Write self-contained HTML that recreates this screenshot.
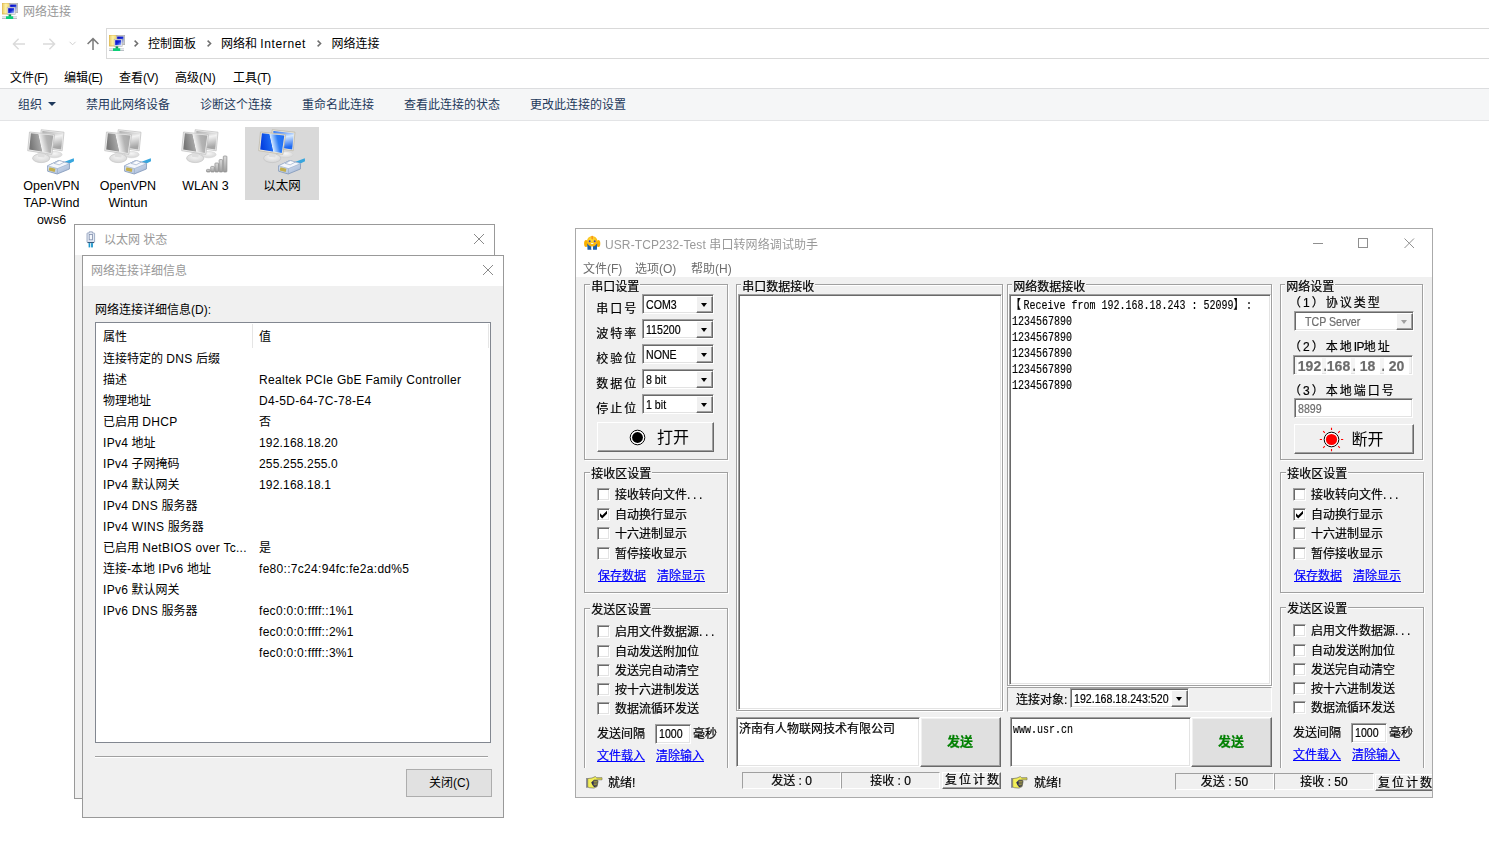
<!DOCTYPE html>
<html lang="zh-CN">
<head>
<meta charset="utf-8">
<title>网络连接</title>
<style>
*{box-sizing:border-box;margin:0;padding:0}
html,body{width:1489px;height:852px;overflow:hidden;background:#fff}
body{position:relative;font-family:"Liberation Sans","Noto Sans CJK SC",sans-serif;font-size:12px;color:#000;-webkit-font-smoothing:antialiased}
.a{position:absolute}
.t{position:absolute;white-space:nowrap;line-height:14px;height:14px;font-size:12px}
.g{color:#999}
.tb{color:#1e395b}
.ic{position:absolute;display:block}
/* classic 3D */
.sunk{position:absolute;background:#fff;border:1px solid;border-color:#a0a0a0 #fff #fff #a0a0a0;box-shadow:inset 1px 1px 0 #696969,inset -1px -1px 0 #e3e3e3}
.rais{position:absolute;background:#f0f0f0;border:1px solid;border-color:#fff #696969 #696969 #fff;box-shadow:inset -1px -1px 0 #a0a0a0,inset 1px 1px 0 #f0f0f0}
.grp{position:absolute;border:1px solid #a0a0a0;box-shadow:1px 1px 0 #fff,inset 1px 1px 0 #fff}
.gl{position:absolute;background:#f0f0f0;white-space:nowrap;line-height:14px;height:14px;font-size:12px;padding:0 1px}
.cb{position:absolute;width:13px;height:13px;background:#fff;border:1px solid;border-color:#a0a0a0 #fff #fff #a0a0a0;box-shadow:inset 1px 1px 0 #696969,inset -1px -1px 0 #e3e3e3}
.lk{color:#00f;text-decoration:underline;text-decoration-thickness:1px;text-underline-offset:.5px}
.sp{letter-spacing:2px}
.u{-webkit-text-stroke:.2px}
.l{letter-spacing:.3px}
.d{letter-spacing:.17px}
.dd{position:absolute;width:17px;height:17px;background:#f0f0f0;border:1px solid;border-color:#fff #696969 #696969 #fff;box-shadow:inset -1px -1px 0 #a0a0a0}
.dd:after{content:"";position:absolute;left:4px;top:6px;border:4px solid transparent;border-left-width:3.5px;border-right-width:3.5px;border-top-color:#000;border-bottom-width:0}
.ddg:after{border-top-color:#a0a0a0}
.ms{font-family:"Liberation Sans",sans-serif;font-size:12.5px;transform:scaleX(.85);transform-origin:0 0}
.mono{font-family:"Liberation Mono","Noto Sans CJK SC",monospace;font-size:12.5px;line-height:16px;white-space:pre;transform:scaleX(.8);transform-origin:0 0;-webkit-text-stroke:.15px #000}
.fw{letter-spacing:3.1px;font-weight:bold}
.dots{letter-spacing:2.6px}
.ipf{position:absolute;top:2px;width:25px;height:16px;background:#fff;text-align:center;font:bold 14px/17px "Liberation Sans",sans-serif;color:#6d6d6d;white-space:nowrap}
.ipd{position:absolute;top:2px;width:4px;height:16px;text-align:center;font:bold 14px/17px "Liberation Sans",sans-serif;color:#6d6d6d}
.pane{position:absolute;border:1px solid;border-color:#a0a0a0 #fff #fff #a0a0a0;text-align:center;padding-top:1px;line-height:14px;font-size:12px;white-space:nowrap}
.row{position:absolute;left:103px;white-space:nowrap;line-height:14px;height:14px}
.val{position:absolute;left:259px;white-space:nowrap;line-height:14px;height:14px}
</style>
</head>
<body>

<!-- ===== Explorer window: 网络连接 ===== -->
<svg class="ic" style="left:2px;top:3px" width="16" height="16" viewBox="0 0 16 16">
<linearGradient id="fot" x1="0" y1="0" x2="1" y2="0"><stop offset="0" stop-color="#e9c765"/><stop offset=".45" stop-color="#fdf3a4"/><stop offset="1" stop-color="#eecb62"/></linearGradient>
<linearGradient id="sct" x1="0" y1="0" x2="1" y2="1"><stop offset="0" stop-color="#0000c8"/><stop offset=".5" stop-color="#1428d8"/><stop offset="1" stop-color="#b8d0ff"/></linearGradient>
<rect x="0" y="0" width="8.5" height="11" fill="url(#fot)" stroke="#d9b24c" stroke-width=".8"/>
<rect x="7.3" y="0.3" width="8.4" height="9.4" fill="#c9c9c9" stroke="#a8a8a8" stroke-width=".6"/>
<rect x="8.2" y="1.6" width="6.2" height="6.4" fill="url(#sct)"/>
<rect x="5.2" y="4.2" width="8" height="7.2" fill="#ececec" stroke="#b4b4b4" stroke-width=".6"/>
<rect x="6.2" y="5.2" width="6" height="5" fill="url(#sct)"/>
<rect x="0" y="13.4" width="15" height="1" fill="#c3c9cf"/>
<rect x="0" y="15" width="15" height="1" fill="#b9bfc5"/>
<rect x="6.6" y="11.4" width="2.6" height="2.4" fill="#0a9a52"/>
<rect x="4" y="13.3" width="7.2" height="2.7" fill="#0ccf78"/>
</svg>
<div class="t g" style="left:23px;top:5.4px;">网络连接</div>
<svg class="ic" style="left:10px;top:36px" width="92" height="16" viewBox="0 0 92 16">
<g fill="none" stroke="#dadada" stroke-width="1.4"><path d="M15 8H3.5M8.6 2.8L3.4 8l5.2 5.2"/><path d="M33 8h11.5M39.4 2.8L44.6 8l-5.2 5.2"/></g>
<path d="M59.6 5.8l3 3 3-3" fill="none" stroke="#d0d0d0" stroke-width="1"/>
<path d="M83 14V2.6M77.6 8L83 2.6 88.4 8" fill="none" stroke="#7a7a7a" stroke-width="1.5"/>
</svg>
<div class="a" style="left:106px;top:28px;width:1400px;height:31px;border:1px solid #d9d9d9;background:#fff"></div>
<svg class="ic" style="left:109px;top:35px" width="16" height="16" viewBox="0 0 16 16">
<linearGradient id="fon" x1="0" y1="0" x2="1" y2="0"><stop offset="0" stop-color="#e9c765"/><stop offset=".45" stop-color="#fdf3a4"/><stop offset="1" stop-color="#eecb62"/></linearGradient>
<linearGradient id="scn" x1="0" y1="0" x2="1" y2="1"><stop offset="0" stop-color="#0000c8"/><stop offset=".5" stop-color="#1428d8"/><stop offset="1" stop-color="#b8d0ff"/></linearGradient>
<rect x="0" y="0" width="8.5" height="11" fill="url(#fon)" stroke="#d9b24c" stroke-width=".8"/>
<rect x="7.3" y="0.3" width="8.4" height="9.4" fill="#c9c9c9" stroke="#a8a8a8" stroke-width=".6"/>
<rect x="8.2" y="1.6" width="6.2" height="6.4" fill="url(#scn)"/>
<rect x="5.2" y="4.2" width="8" height="7.2" fill="#ececec" stroke="#b4b4b4" stroke-width=".6"/>
<rect x="6.2" y="5.2" width="6" height="5" fill="url(#scn)"/>
<rect x="0" y="13.4" width="15" height="1" fill="#c3c9cf"/>
<rect x="0" y="15" width="15" height="1" fill="#b9bfc5"/>
<rect x="6.6" y="11.4" width="2.6" height="2.4" fill="#0a9a52"/>
<rect x="4" y="13.3" width="7.2" height="2.7" fill="#0ccf78"/>
</svg>
<svg class="ic" style="left:132.5px;top:39px" width="7" height="9" viewBox="0 0 7 9"><path d="M1.6 1.6L4.6 4.5 1.6 7.4" fill="none" stroke="#6e6e6e" stroke-width="1.5"/></svg>
<svg class="ic" style="left:205.5px;top:39px" width="7" height="9" viewBox="0 0 7 9"><path d="M1.6 1.6L4.6 4.5 1.6 7.4" fill="none" stroke="#6e6e6e" stroke-width="1.5"/></svg>
<svg class="ic" style="left:315.5px;top:39px" width="7" height="9" viewBox="0 0 7 9"><path d="M1.6 1.6L4.6 4.5 1.6 7.4" fill="none" stroke="#6e6e6e" stroke-width="1.5"/></svg>
<div class="t" style="left:148px;top:37px;">控制面板</div>
<div class="t" style="left:221px;top:37px;">网络和 <span style="letter-spacing:.62px">Internet</span></div>
<div class="t" style="left:331.5px;top:37px;">网络连接</div>
<div class="t" style="left:10px;top:71.4px;">文件<span style="letter-spacing:-0.7px">(F)</span></div>
<div class="t" style="left:64px;top:71.4px;">编辑<span style="letter-spacing:-0.6px">(E)</span></div>
<div class="t" style="left:119px;top:71.4px;">查看<span style="letter-spacing:-0.3px">(V)</span></div>
<div class="t" style="left:175px;top:71.4px;">高级<span style="letter-spacing:0px">(N)</span></div>
<div class="t" style="left:233px;top:71.4px;">工具<span style="letter-spacing:-0.5px">(T)</span></div>
<div class="a" style="left:0;top:88px;width:1489px;height:33px;background:#f5f6f7;border-top:1px solid #dcdddf;border-bottom:1px solid #e3e4e6"></div>
<div class="t tb" style="left:18px;top:98px;">组织</div>
<div class="t tb" style="left:86px;top:98px;">禁用此网络设备</div>
<div class="t tb" style="left:200px;top:98px;">诊断这个连接</div>
<div class="t tb" style="left:302px;top:98px;">重命名此连接</div>
<div class="t tb" style="left:404px;top:98px;">查看此连接的状态</div>
<div class="t tb" style="left:530px;top:98px;">更改此连接的设置</div>
<div class="a" style="left:48px;top:102px;width:0;height:0;border:4px solid transparent;border-top:4.5px solid #1e395b;border-bottom:0"></div>
<div class="a" style="left:245px;top:127px;width:74px;height:73px;background:#d9d9d9"></div>
<svg class="ic" style="left:27px;top:128px" width="50" height="48" viewBox="0 0 50 48">
<linearGradient id="ai1" x1="0" y1="0.3" x2="1" y2="0.12"><stop offset="0" stop-color="#777777"/><stop offset=".4" stop-color="#a6a6a6"/><stop offset=".43" stop-color="#f2f2f2"/><stop offset=".7" stop-color="#b4b4b4"/><stop offset="1" stop-color="#a6a6a6"/></linearGradient>
<linearGradient id="bi1" x1="0" y1="0" x2="0.25" y2="1"><stop offset="0" stop-color="#a6a6a6"/><stop offset=".45" stop-color="#f2f2f2"/><stop offset="1" stop-color="#a6a6a6"/></linearGradient>
<linearGradient id="pi1" x1="0" y1="0" x2="1" y2="1"><stop offset="0" stop-color="#eef3fb"/><stop offset="1" stop-color="#9fb4d4"/></linearGradient>
<linearGradient id="wi1" x1="0" y1="0" x2="0" y2="1"><stop offset="0" stop-color="#dcdcdc"/><stop offset="1" stop-color="#9c9c9c"/></linearGradient>
<radialGradient id="ei1" cx=".5" cy=".35" r=".7"><stop offset="0" stop-color="#f6f6f6"/><stop offset="1" stop-color="#d2d2d2"/></radialGradient>
<ellipse cx="27.5" cy="26.6" rx="7.6" ry="3.2" fill="url(#ei1)" stroke="#d0d0d0" stroke-width=".5"/>
<polygon points="14.2,1.7 37,4.2 35.2,22.8 12.8,19.6" fill="#ececec" stroke="#bdbdbd" stroke-width=".7"/>
<polygon points="15.4,3 35.8,5.2 34.2,21.4 14.2,18.5" fill="url(#bi1)"/>
<ellipse cx="14.2" cy="30.2" rx="8.6" ry="4.4" fill="url(#ei1)" stroke="#c4c4c4" stroke-width=".7"/>
<polygon points="10.5,24 18,25 17.4,29.6 11.2,29" fill="#dedede"/>
<polygon points="2.5,4 27.6,6.6 24.8,26.4 0.7,22.7" fill="#ececec" stroke="#bdbdbd" stroke-width=".7"/>
<polygon points="3.9,5.3 26.3,7.6 23.8,25 2.2,21.6" fill="url(#ai1)"/>
<polygon points="37.5,33.8 46.8,30.2 47,33.2 40.5,36.4" fill="#38a6de"/>
<polygon points="20.6,37.8 31.5,32.6 42.6,35.6 42.4,41 30.2,46 20.6,43.2" fill="url(#pi1)" stroke="#7f95b8" stroke-width=".8"/>
<polygon points="20.6,37.8 31.5,32.6 42.6,35.6 30.4,40.6" fill="#f4f7fc" stroke="#98abc9" stroke-width=".6"/>
<polygon points="27.2,35.4 32.4,32.6 37.4,34 32.2,36.8" fill="#fbfcfe" stroke="#8fa3c3" stroke-width=".6"/>
<path d="M30.4 40.6V46" stroke="#8fa3c3" stroke-width=".6"/>
<rect x="22" y="40" width="6.2" height="3.2" fill="#c2ae4c" transform="rotate(14 25 41.5)"/>
</svg>
<svg class="ic" style="left:104px;top:128px" width="50" height="48" viewBox="0 0 50 48">
<linearGradient id="ai2" x1="0" y1="0.3" x2="1" y2="0.12"><stop offset="0" stop-color="#777777"/><stop offset=".4" stop-color="#a6a6a6"/><stop offset=".43" stop-color="#f2f2f2"/><stop offset=".7" stop-color="#b4b4b4"/><stop offset="1" stop-color="#a6a6a6"/></linearGradient>
<linearGradient id="bi2" x1="0" y1="0" x2="0.25" y2="1"><stop offset="0" stop-color="#a6a6a6"/><stop offset=".45" stop-color="#f2f2f2"/><stop offset="1" stop-color="#a6a6a6"/></linearGradient>
<linearGradient id="pi2" x1="0" y1="0" x2="1" y2="1"><stop offset="0" stop-color="#eef3fb"/><stop offset="1" stop-color="#9fb4d4"/></linearGradient>
<linearGradient id="wi2" x1="0" y1="0" x2="0" y2="1"><stop offset="0" stop-color="#dcdcdc"/><stop offset="1" stop-color="#9c9c9c"/></linearGradient>
<radialGradient id="ei2" cx=".5" cy=".35" r=".7"><stop offset="0" stop-color="#f6f6f6"/><stop offset="1" stop-color="#d2d2d2"/></radialGradient>
<ellipse cx="27.5" cy="26.6" rx="7.6" ry="3.2" fill="url(#ei2)" stroke="#d0d0d0" stroke-width=".5"/>
<polygon points="14.2,1.7 37,4.2 35.2,22.8 12.8,19.6" fill="#ececec" stroke="#bdbdbd" stroke-width=".7"/>
<polygon points="15.4,3 35.8,5.2 34.2,21.4 14.2,18.5" fill="url(#bi2)"/>
<ellipse cx="14.2" cy="30.2" rx="8.6" ry="4.4" fill="url(#ei2)" stroke="#c4c4c4" stroke-width=".7"/>
<polygon points="10.5,24 18,25 17.4,29.6 11.2,29" fill="#dedede"/>
<polygon points="2.5,4 27.6,6.6 24.8,26.4 0.7,22.7" fill="#ececec" stroke="#bdbdbd" stroke-width=".7"/>
<polygon points="3.9,5.3 26.3,7.6 23.8,25 2.2,21.6" fill="url(#ai2)"/>
<polygon points="37.5,33.8 46.8,30.2 47,33.2 40.5,36.4" fill="#38a6de"/>
<polygon points="20.6,37.8 31.5,32.6 42.6,35.6 42.4,41 30.2,46 20.6,43.2" fill="url(#pi2)" stroke="#7f95b8" stroke-width=".8"/>
<polygon points="20.6,37.8 31.5,32.6 42.6,35.6 30.4,40.6" fill="#f4f7fc" stroke="#98abc9" stroke-width=".6"/>
<polygon points="27.2,35.4 32.4,32.6 37.4,34 32.2,36.8" fill="#fbfcfe" stroke="#8fa3c3" stroke-width=".6"/>
<path d="M30.4 40.6V46" stroke="#8fa3c3" stroke-width=".6"/>
<rect x="22" y="40" width="6.2" height="3.2" fill="#c2ae4c" transform="rotate(14 25 41.5)"/>
</svg>
<svg class="ic" style="left:181px;top:128px" width="50" height="48" viewBox="0 0 50 48">
<linearGradient id="ai3" x1="0" y1="0.3" x2="1" y2="0.12"><stop offset="0" stop-color="#777777"/><stop offset=".4" stop-color="#a6a6a6"/><stop offset=".43" stop-color="#f2f2f2"/><stop offset=".7" stop-color="#b4b4b4"/><stop offset="1" stop-color="#a6a6a6"/></linearGradient>
<linearGradient id="bi3" x1="0" y1="0" x2="0.25" y2="1"><stop offset="0" stop-color="#a6a6a6"/><stop offset=".45" stop-color="#f2f2f2"/><stop offset="1" stop-color="#a6a6a6"/></linearGradient>
<linearGradient id="pi3" x1="0" y1="0" x2="1" y2="1"><stop offset="0" stop-color="#eef3fb"/><stop offset="1" stop-color="#9fb4d4"/></linearGradient>
<linearGradient id="wi3" x1="0" y1="0" x2="0" y2="1"><stop offset="0" stop-color="#dcdcdc"/><stop offset="1" stop-color="#9c9c9c"/></linearGradient>
<radialGradient id="ei3" cx=".5" cy=".35" r=".7"><stop offset="0" stop-color="#f6f6f6"/><stop offset="1" stop-color="#d2d2d2"/></radialGradient>
<ellipse cx="27.5" cy="26.6" rx="7.6" ry="3.2" fill="url(#ei3)" stroke="#d0d0d0" stroke-width=".5"/>
<polygon points="14.2,1.7 37,4.2 35.2,22.8 12.8,19.6" fill="#ececec" stroke="#bdbdbd" stroke-width=".7"/>
<polygon points="15.4,3 35.8,5.2 34.2,21.4 14.2,18.5" fill="url(#bi3)"/>
<ellipse cx="14.2" cy="30.2" rx="8.6" ry="4.4" fill="url(#ei3)" stroke="#c4c4c4" stroke-width=".7"/>
<polygon points="10.5,24 18,25 17.4,29.6 11.2,29" fill="#dedede"/>
<polygon points="2.5,4 27.6,6.6 24.8,26.4 0.7,22.7" fill="#ececec" stroke="#bdbdbd" stroke-width=".7"/>
<polygon points="3.9,5.3 26.3,7.6 23.8,25 2.2,21.6" fill="url(#ai3)"/>
<rect x="25.5" y="41.4" width="3.6" height="2.6" rx=".8" fill="url(#wi3)" stroke="#8a8a8a" stroke-width=".7"/>
<rect x="29.7" y="38.4" width="3.6" height="5.6" rx=".8" fill="url(#wi3)" stroke="#8a8a8a" stroke-width=".7"/>
<rect x="33.9" y="35.0" width="3.6" height="9" rx=".8" fill="url(#wi3)" stroke="#8a8a8a" stroke-width=".7"/>
<rect x="38.1" y="31.6" width="3.6" height="12.4" rx=".8" fill="url(#wi3)" stroke="#8a8a8a" stroke-width=".7"/>
<rect x="42.3" y="28.0" width="3.6" height="16" rx=".8" fill="url(#wi3)" stroke="#8a8a8a" stroke-width=".7"/>
</svg>
<svg class="ic" style="left:258px;top:128px" width="50" height="48" viewBox="0 0 50 48">
<linearGradient id="ai4" x1="0" y1="0.3" x2="1" y2="0.12"><stop offset="0" stop-color="#0540e0"/><stop offset=".4" stop-color="#1e6af2"/><stop offset=".43" stop-color="#d6e9ff"/><stop offset=".7" stop-color="#2b7cf6"/><stop offset="1" stop-color="#1e6af2"/></linearGradient>
<linearGradient id="bi4" x1="0" y1="0" x2="0.25" y2="1"><stop offset="0" stop-color="#1e6af2"/><stop offset=".45" stop-color="#d6e9ff"/><stop offset="1" stop-color="#1e6af2"/></linearGradient>
<linearGradient id="pi4" x1="0" y1="0" x2="1" y2="1"><stop offset="0" stop-color="#eef3fb"/><stop offset="1" stop-color="#9fb4d4"/></linearGradient>
<linearGradient id="wi4" x1="0" y1="0" x2="0" y2="1"><stop offset="0" stop-color="#dcdcdc"/><stop offset="1" stop-color="#9c9c9c"/></linearGradient>
<radialGradient id="ei4" cx=".5" cy=".35" r=".7"><stop offset="0" stop-color="#f6f6f6"/><stop offset="1" stop-color="#d2d2d2"/></radialGradient>
<ellipse cx="27.5" cy="26.6" rx="7.6" ry="3.2" fill="url(#ei4)" stroke="#d0d0d0" stroke-width=".5"/>
<polygon points="14.2,1.7 37,4.2 35.2,22.8 12.8,19.6" fill="#efebe0" stroke="#b9b3a4" stroke-width=".7"/>
<polygon points="15.4,3 35.8,5.2 34.2,21.4 14.2,18.5" fill="url(#bi4)"/>
<ellipse cx="14.2" cy="30.2" rx="8.6" ry="4.4" fill="url(#ei4)" stroke="#c4c4c4" stroke-width=".7"/>
<polygon points="10.5,24 18,25 17.4,29.6 11.2,29" fill="#dedede"/>
<polygon points="2.5,4 27.6,6.6 24.8,26.4 0.7,22.7" fill="#efebe0" stroke="#b9b3a4" stroke-width=".7"/>
<polygon points="3.9,5.3 26.3,7.6 23.8,25 2.2,21.6" fill="url(#ai4)"/>
<polygon points="37.5,33.8 46.8,30.2 47,33.2 40.5,36.4" fill="#38a6de"/>
<polygon points="20.6,37.8 31.5,32.6 42.6,35.6 42.4,41 30.2,46 20.6,43.2" fill="url(#pi4)" stroke="#7f95b8" stroke-width=".8"/>
<polygon points="20.6,37.8 31.5,32.6 42.6,35.6 30.4,40.6" fill="#f4f7fc" stroke="#98abc9" stroke-width=".6"/>
<polygon points="27.2,35.4 32.4,32.6 37.4,34 32.2,36.8" fill="#fbfcfe" stroke="#8fa3c3" stroke-width=".6"/>
<path d="M30.4 40.6V46" stroke="#8fa3c3" stroke-width=".6"/>
<rect x="22" y="40" width="6.2" height="3.2" fill="#c2ae4c" transform="rotate(14 25 41.5)"/>
</svg>
<div class="t" style="left:11.5px;top:178px;width:80px;text-align:center;line-height:17px;height:17px;font-size:12.5px">OpenVPN</div>
<div class="t" style="left:11.5px;top:195px;width:80px;text-align:center;line-height:17px;height:17px;font-size:12.5px">TAP-Wind</div>
<div class="t" style="left:11.5px;top:212px;width:80px;text-align:center;line-height:17px;height:17px;font-size:12.5px">ows6</div>
<div class="t" style="left:88px;top:178px;width:80px;text-align:center;line-height:17px;height:17px;font-size:12.5px">OpenVPN</div>
<div class="t" style="left:88px;top:195px;width:80px;text-align:center;line-height:17px;height:17px;font-size:12.5px">Wintun</div>
<div class="t" style="left:165.5px;top:178px;width:80px;text-align:center;line-height:17px;height:17px;font-size:12.5px">WLAN 3</div>
<div class="t" style="left:242px;top:178px;width:80px;text-align:center;line-height:17px;height:17px;font-size:12.5px">以太网</div>
<!-- ===== 以太网 状态 dialog ===== -->
<div class="a" style="left:74px;top:224px;width:421px;height:575px;border:1px solid #999;background:#f0f0f0"><div class="a" style="left:0;top:0;width:419px;height:30px;background:#fff"></div></div>
<svg class="ic" style="left:86px;top:231px" width="10" height="17" viewBox="0 0 10 17">
<path d="M3.2 .8h3.2v1.2h1.6q.6 0 .6 .6v8.2q0 .6-.6 .6H1.6q-.6 0-.6-.6V2.6q0-.6 .6-.6h1.6z" fill="#e3e9f4" stroke="#8c9bb8" stroke-width=".8"/>
<rect x="3.2" y="3.4" width="3.2" height="5.4" fill="#f4f6fa" stroke="#7f8eab" stroke-width=".8"/>
<rect x="1.6" y="11" width="6.4" height="1.1" fill="#36597c"/>
<rect x="2.6" y="12.1" width="1.6" height="4.3" fill="#1c96cc"/><rect x="5.1" y="12.1" width="1.8" height="4.3" fill="#1c96cc"/>
</svg>
<div class="t g" style="left:104px;top:233.4px;">以太网 状态</div>
<svg class="ic" style="left:473px;top:233px" width="12" height="12" viewBox="0 0 12 12"><path d="M1 1l10 10M11 1L1 11" stroke="#8a8a8a" stroke-width="1" fill="none"/></svg>
<!-- ===== 网络连接详细信息 dialog ===== -->
<div class="a" style="left:82px;top:255px;width:422px;height:563px;border:1px solid #999;background:#f0f0f0"><div class="a" style="left:0;top:0;width:420px;height:30px;background:#fff"></div></div>
<div class="t g" style="left:91px;top:263.8px;">网络连接详细信息</div>
<svg class="ic" style="left:482px;top:264px" width="12" height="12" viewBox="0 0 12 12"><path d="M1 1l10 10M11 1L1 11" stroke="#8a8a8a" stroke-width="1" fill="none"/></svg>
<div class="t" style="left:95px;top:303px;">网络连接详细信息(D):</div>
<div class="a" style="left:95px;top:322px;width:396px;height:421px;border:1px solid #828790;background:#fff"></div>
<div class="a" style="left:252px;top:324px;width:1px;height:24px;background:#e5e5e5"></div>
<div class="a" style="left:488px;top:324px;width:1px;height:24px;background:#e5e5e5"></div>
<div class="t" style="left:103px;top:329.6px;">属性</div>
<div class="t" style="left:259px;top:329.6px;">值</div>
<div class="t" style="left:103px;top:351.6px;">连接特定的 <span class="l">DNS</span> 后缀</div>
<div class="t" style="left:103px;top:372.6px;">描述</div>
<div class="t" style="left:259px;top:372.6px;"><span class="l">Realtek PCIe GbE Family Controller</span></div>
<div class="t" style="left:103px;top:393.6px;">物理地址</div>
<div class="t" style="left:259px;top:393.6px;"><span class="l">D4-5D-64-7C-78-E4</span></div>
<div class="t" style="left:103px;top:414.6px;">已启用 <span class="l">DHCP</span></div>
<div class="t" style="left:259px;top:414.6px;">否</div>
<div class="t" style="left:103px;top:435.6px;"><span class="l">IPv4</span> 地址</div>
<div class="t" style="left:259px;top:435.6px;"><span class="d">192.168.18.20</span></div>
<div class="t" style="left:103px;top:456.6px;"><span class="l">IPv4</span> 子网掩码</div>
<div class="t" style="left:259px;top:456.6px;"><span class="d">255.255.255.0</span></div>
<div class="t" style="left:103px;top:477.6px;"><span class="l">IPv4</span> 默认网关</div>
<div class="t" style="left:259px;top:477.6px;"><span class="d">192.168.18.1</span></div>
<div class="t" style="left:103px;top:498.6px;"><span class="l">IPv4 DNS</span> 服务器</div>
<div class="t" style="left:103px;top:519.6px;"><span class="l">IPv4 WINS</span> 服务器</div>
<div class="t" style="left:103px;top:540.6px;">已启用 <span class="l">NetBIOS over Tc...</span></div>
<div class="t" style="left:259px;top:540.6px;">是</div>
<div class="t" style="left:103px;top:561.6px;">连接-本地 <span class="l">IPv6</span> 地址</div>
<div class="t" style="left:259px;top:561.6px;"><span class="l">fe80::7c24:94fc:fe2a:dd%5</span></div>
<div class="t" style="left:103px;top:582.6px;"><span class="l">IPv6</span> 默认网关</div>
<div class="t" style="left:103px;top:603.6px;"><span class="l">IPv6 DNS</span> 服务器</div>
<div class="t" style="left:259px;top:603.6px;"><span class="l">fec0:0:0:ffff::1%1</span></div>
<div class="t" style="left:259px;top:624.6px;"><span class="l">fec0:0:0:ffff::2%1</span></div>
<div class="t" style="left:259px;top:645.6px;"><span class="l">fec0:0:0:ffff::3%1</span></div>
<div class="a" style="left:95px;top:756px;width:393px;height:2px;border-top:1px solid #a0a0a0;border-bottom:1px solid #fff"></div>
<div class="a" style="left:406px;top:769px;width:86px;height:28px;border:1px solid #adadad;background:#e1e1e1"></div>
<div class="t" style="left:429px;top:776px;">关闭(C)</div>
<div class="a u" style="left:0;top:0;width:0;height:0;will-change:transform">
<!-- ===== USR-TCP232-Test window ===== -->
<div class="a" style="left:575px;top:228px;width:858px;height:570px;border:1px solid #aaa;background:#f0f0f0;overflow:hidden"><div class="a" style="left:0;top:0;width:856px;height:48px;background:#fff"></div></div>
<svg class="ic" style="left:584px;top:235px" width="17" height="16" viewBox="0 0 17 16">
<radialGradient id="uh" cx=".45" cy=".35" r=".7"><stop offset="0" stop-color="#ffe23a"/><stop offset="1" stop-color="#f7a800"/></radialGradient>
<ellipse cx="2" cy="8.6" rx="1.9" ry="3.5" fill="#f9b000"/><ellipse cx="14.4" cy="8.6" rx="1.9" ry="3.5" fill="#f9b000"/>
<path d="M3.2 8.4L7.6 10 7.4 14.7H3.5z" fill="#1d5fa8"/><path d="M13.2 8.4L8.8 10 9 14.7h3.9z" fill="#1d5fa8"/>
<rect x="7.4" y="10.8" width="1.6" height="3.2" fill="#fff"/>
<ellipse cx="8.2" cy="6.3" rx="5.2" ry="5.2" fill="url(#uh)"/>
<rect x="7.4" y=".8" width="1.6" height="3.6" rx=".6" fill="#f7941e"/>
<circle cx="5.7" cy="6.3" r=".95" fill="#3c3cb4"/><circle cx="10.7" cy="6.3" r=".95" fill="#3c3cb4"/>
<rect x="7" y="8.1" width="2.4" height=".9" rx=".3" fill="#f2f2ff"/>
</svg>
<div class="t g" style="left:605px;top:237.5px;letter-spacing:.1px;-webkit-text-stroke:0">USR-TCP232-Test 串口转网络调试助手</div>
<svg class="ic" style="left:1310px;top:236px" width="108" height="14" viewBox="0 0 108 14">
<g fill="none" stroke="#8f8f8f" stroke-width="1"><path d="M3 7.5h10"/><rect x="48.5" y="2.5" width="9" height="9"/><path d="M94.5 2.5l9.5 9.5M104 2.5l-9.5 9.5"/></g></svg>
<div class="t" style="left:583px;top:262px;color:#6d6d6d;-webkit-text-stroke:0">文件(F)</div>
<div class="t" style="left:635px;top:262px;color:#6d6d6d;-webkit-text-stroke:0">选项(O)</div>
<div class="t" style="left:691px;top:262px;color:#6d6d6d;-webkit-text-stroke:0">帮助(H)</div>
<div class="grp" style="left:584px;top:284px;width:144px;height:176px;"></div>
<div class="gl" style="left:590.2px;top:280px">串口设置</div>
<div class="t sp" style="left:596.3px;top:302px;">串口号</div>
<div class="sunk" style="left:642px;top:294px;width:72px;height:20px;"><div class="t ms" style="left:3px;top:3px;">COM3</div><div class="dd" style="right:0;top:1px"></div></div>
<div class="t sp" style="left:596.3px;top:327px;">波特率</div>
<div class="sunk" style="left:642px;top:319px;width:72px;height:20px;"><div class="t ms" style="left:3px;top:3px;">115200</div><div class="dd" style="right:0;top:1px"></div></div>
<div class="t sp" style="left:596.3px;top:352px;">校验位</div>
<div class="sunk" style="left:642px;top:344px;width:72px;height:20px;"><div class="t ms" style="left:3px;top:3px;">NONE</div><div class="dd" style="right:0;top:1px"></div></div>
<div class="t sp" style="left:596.3px;top:377px;">数据位</div>
<div class="sunk" style="left:642px;top:369px;width:72px;height:20px;"><div class="t ms" style="left:3px;top:3px;">8 bit</div><div class="dd" style="right:0;top:1px"></div></div>
<div class="t sp" style="left:596.3px;top:402px;">停止位</div>
<div class="sunk" style="left:642px;top:394px;width:72px;height:20px;"><div class="t ms" style="left:3px;top:3px;">1 bit</div><div class="dd" style="right:0;top:1px"></div></div>
<div class="rais" style="left:597px;top:422px;width:117px;height:30px;"><svg class="ic" style="left:31px;top:6px" width="17" height="17" viewBox="0 0 17 17"><circle cx="8.5" cy="8.5" r="7.3" fill="#fff" stroke="#000" stroke-width="1"/><circle cx="8.5" cy="8.5" r="5.4" fill="#000"/></svg><div class="t" style="left:59px;top:5px;font-size:16px;line-height:20px;height:20px;-webkit-text-stroke:0">打开</div></div>
<div class="grp" style="left:584px;top:472px;width:144px;height:121px;"></div>
<div class="gl" style="left:590.2px;top:467px">接收区设置</div>
<div class="cb" style="left:597px;top:488px"></div><div class="t" style="left:615px;top:488px;">接收转向文件<span class="dots">...</span></div>
<div class="cb" style="left:597px;top:508px"><svg class="ic" style="left:1px;top:1px" width="9" height="9" viewBox="0 0 9 9"><path d="M1 3.3L3.2 5.5 8 .8v2.9L3.2 8.5 1 6.3z" fill="#000"/></svg></div><div class="t" style="left:615px;top:508px;">自动换行显示</div>
<div class="cb" style="left:597px;top:527px"></div><div class="t" style="left:615px;top:527px;">十六进制显示</div>
<div class="cb" style="left:597px;top:547px"></div><div class="t" style="left:615px;top:547px;">暂停接收显示</div>
<div class="t lk" style="left:598px;top:568.6px;">保存数据</div>
<div class="t lk" style="left:657px;top:568.6px;">清除显示</div>
<div class="grp" style="left:584px;top:608px;width:144px;height:160px;border-bottom:0;box-shadow:1px 0 0 #fff,inset 1px 1px 0 #fff;"></div>
<div class="gl" style="left:590.2px;top:603px">发送区设置</div>
<div class="cb" style="left:597px;top:625px"></div><div class="t" style="left:615px;top:625px;">启用文件数据源<span class="dots">...</span></div>
<div class="cb" style="left:597px;top:645px"></div><div class="t" style="left:615px;top:645px;">自动发送附加位</div>
<div class="cb" style="left:597px;top:664px"></div><div class="t" style="left:615px;top:664px;">发送完自动清空</div>
<div class="cb" style="left:597px;top:683px"></div><div class="t" style="left:615px;top:683px;">按十六进制发送</div>
<div class="cb" style="left:597px;top:702px"></div><div class="t" style="left:615px;top:702px;">数据流循环发送</div>
<div class="t" style="left:597px;top:727px;">发送间隔</div>
<div class="sunk" style="left:655px;top:724px;width:36px;height:20px;"><div class="t ms" style="left:3px;top:2px">1000</div></div>
<div class="t" style="left:693px;top:727px;">毫秒</div>
<div class="t lk" style="left:597px;top:749px;">文件载入</div>
<div class="t lk" style="left:656px;top:749px;">清除输入</div>
<div class="grp" style="left:736px;top:284px;width:267px;height:427px;"></div>
<div class="gl" style="left:741.2px;top:280px">串口数据接收</div>
<div class="sunk" style="left:738px;top:294px;width:264px;height:416px;"></div>
<div class="sunk" style="left:736px;top:717px;width:184px;height:50px;"><div class="t" style="left:2px;top:4px">济南有人物联网技术有限公司</div></div>
<div class="rais" style="left:920px;top:717px;width:81px;height:50px;background:#e0e0e0"><div class="t" style="left:-1px;width:80px;text-align:center;top:17px;font-size:13px;font-weight:bold;color:#008000">发送</div></div>
<div class="grp" style="left:1007px;top:284px;width:265px;height:402px;"></div>
<div class="gl" style="left:1012.2px;top:280px">网络数据接收</div>
<div class="sunk" style="left:1009px;top:294px;width:262px;height:391px;"><div class="mono" style="position:absolute;left:1px;top:3px"><span class="fw">【</span>Receive from 192.168.18.243 : 52099<span class="fw">】</span>:
<span style="position:relative;left:1.2px">1234567890
1234567890
1234567890
1234567890
1234567890</span></div></div>
<div class="a" style="left:1007px;top:687px;width:265px;height:25px;border:1px solid;border-color:#a0a0a0 #fff #fff #a0a0a0"></div>
<div class="t" style="left:1016px;top:693px;">连接对象:</div>
<div class="sunk" style="left:1070px;top:688px;width:119px;height:20px;"><div class="t ms" style="left:3px;top:3px;">192.168.18.243:520</div><div class="dd" style="right:0;top:1px"></div></div>
<div class="sunk" style="left:1010px;top:717px;width:181px;height:50px;"><div class="mono" style="position:absolute;left:1.5px;top:4px">www.usr.cn</div></div>
<div class="rais" style="left:1191px;top:717px;width:81px;height:50px;background:#e0e0e0"><div class="t" style="left:-1px;width:80px;text-align:center;top:17px;font-size:13px;font-weight:bold;color:#008000">发送</div></div>
<div class="grp" style="left:1280px;top:284px;width:143px;height:176px;"></div>
<div class="gl" style="left:1285.2px;top:280px">网络设置</div>
<div class="t sp" style="left:1289px;top:296px;">（1）协议类型</div>
<div class="sunk" style="left:1294px;top:311px;width:120px;height:20px;"><div class="t ms" style="left:9.5px;top:3px;color:#6d6d6d;">TCP Server</div><div class="dd ddg" style="right:0;top:1px"></div></div>
<div class="t sp" style="left:1289px;top:340px;">（2）本地<span style="letter-spacing:-.6px">IP</span>地址</div>
<div class="sunk" style="left:1293px;top:355px;width:120px;height:20px;background:#f4f4f4"><div class="ipf" style="left:3px">192</div><div class="ipd" style="left:29.5px">.</div><div class="ipf" style="left:32px">168</div><div class="ipd" style="left:58.5px">.</div><div class="ipf" style="left:61px">18</div><div class="ipd" style="left:87.5px">.</div><div class="ipf" style="left:90px">20</div></div>
<div class="t sp" style="left:1289px;top:384px;">（3）本地端口号</div>
<div class="sunk" style="left:1294px;top:398px;width:119px;height:20px;"><div class="t ms" style="left:3px;top:3px;color:#6d6d6d">8899</div></div>
<div class="rais" style="left:1294px;top:424px;width:120px;height:30px;"><svg class="ic" style="left:24px;top:2px" width="25" height="25" viewBox="0 0 25 25"><g stroke="#f00" stroke-width="1.1"><path d="M12.5 .8v2.2M12.5 22v2.2M.8 12.5h2.2M22 12.5h2.2M4.2 4.2l1.6 1.6M19.2 19.2l1.6 1.6M4.2 20.8l1.6-1.6M19.2 5.8l1.6-1.6"/></g><circle cx="12.5" cy="12.5" r="7.3" fill="#fff" stroke="#000" stroke-width="1"/><circle cx="12.5" cy="12.5" r="5.6" fill="#f00"/></svg><div class="t" style="left:56.5px;top:5px;font-size:16px;line-height:20px;height:20px;-webkit-text-stroke:0">断开</div></div>
<div class="grp" style="left:1280px;top:472px;width:144px;height:121px;"></div>
<div class="gl" style="left:1286.2px;top:467px">接收区设置</div>
<div class="cb" style="left:1293px;top:488px"></div><div class="t" style="left:1311px;top:488px;">接收转向文件<span class="dots">...</span></div>
<div class="cb" style="left:1293px;top:508px"><svg class="ic" style="left:1px;top:1px" width="9" height="9" viewBox="0 0 9 9"><path d="M1 3.3L3.2 5.5 8 .8v2.9L3.2 8.5 1 6.3z" fill="#000"/></svg></div><div class="t" style="left:1311px;top:508px;">自动换行显示</div>
<div class="cb" style="left:1293px;top:527px"></div><div class="t" style="left:1311px;top:527px;">十六进制显示</div>
<div class="cb" style="left:1293px;top:547px"></div><div class="t" style="left:1311px;top:547px;">暂停接收显示</div>
<div class="t lk" style="left:1294px;top:568.6px;">保存数据</div>
<div class="t lk" style="left:1353px;top:568.6px;">清除显示</div>
<div class="grp" style="left:1280px;top:607px;width:144px;height:161px;border-bottom:0;box-shadow:1px 0 0 #fff,inset 1px 1px 0 #fff;"></div>
<div class="gl" style="left:1286.2px;top:602px">发送区设置</div>
<div class="cb" style="left:1293px;top:624px"></div><div class="t" style="left:1311px;top:624px;">启用文件数据源<span class="dots">...</span></div>
<div class="cb" style="left:1293px;top:644px"></div><div class="t" style="left:1311px;top:644px;">自动发送附加位</div>
<div class="cb" style="left:1293px;top:663px"></div><div class="t" style="left:1311px;top:663px;">发送完自动清空</div>
<div class="cb" style="left:1293px;top:682px"></div><div class="t" style="left:1311px;top:682px;">按十六进制发送</div>
<div class="cb" style="left:1293px;top:701px"></div><div class="t" style="left:1311px;top:701px;">数据流循环发送</div>
<div class="t" style="left:1293px;top:726px;">发送间隔</div>
<div class="sunk" style="left:1351px;top:723px;width:36px;height:20px;"><div class="t ms" style="left:3px;top:2px">1000</div></div>
<div class="t" style="left:1389px;top:726px;">毫秒</div>
<div class="t lk" style="left:1293px;top:748px;">文件载入</div>
<div class="t lk" style="left:1352px;top:748px;">清除输入</div>
<svg class="ic" style="left:586px;top:776px" width="17" height="13" viewBox="0 0 17 13">
<rect x="0.2" y="2" width="1.5" height="9.8" fill="#77778a"/>
<path d="M1.7 2.6L6 2 9.4 .5l1 1.2H16v2.1h-4.6l.7 1.6-1 5.2L8 12.1 3.4 11.7 1.7 11z" fill="#f3ef58" stroke="#5c5c48" stroke-width=".6"/>
<path d="M5.2 6.6L8 3.8h3.2l.7 1.8-.9 4.6-2.8 1L6.4 9z" fill="#2c2c52"/>
<path d="M7.6 5.2h3.8M7.6 7h3.6M7.6 8.8h3.2" stroke="#d4cc3c" stroke-width=".9"/>
<path d="M10.6 2.7H16" stroke="#b9b23a" stroke-width=".8"/>
</svg>
<div class="t" style="left:608px;top:776px;">就绪!</div>
<div class="pane" style="left:742px;top:772px;width:99px;height:17px;">发送 : 0</div>
<div class="pane" style="left:841px;top:772px;width:99px;height:17px;">接收 : 0</div>
<div class="rais" style="left:942px;top:772px;width:59px;height:17px;overflow:hidden"><div class="t sp" style="left:2px;top:0px">复位计数</div></div>
<svg class="ic" style="left:1011px;top:776px" width="17" height="13" viewBox="0 0 17 13">
<rect x="0.2" y="2" width="1.5" height="9.8" fill="#77778a"/>
<path d="M1.7 2.6L6 2 9.4 .5l1 1.2H16v2.1h-4.6l.7 1.6-1 5.2L8 12.1 3.4 11.7 1.7 11z" fill="#f3ef58" stroke="#5c5c48" stroke-width=".6"/>
<path d="M5.2 6.6L8 3.8h3.2l.7 1.8-.9 4.6-2.8 1L6.4 9z" fill="#2c2c52"/>
<path d="M7.6 5.2h3.8M7.6 7h3.6M7.6 8.8h3.2" stroke="#d4cc3c" stroke-width=".9"/>
<path d="M10.6 2.7H16" stroke="#b9b23a" stroke-width=".8"/>
</svg>
<div class="t" style="left:1034px;top:776px;">就绪!</div>
<div class="pane" style="left:1175px;top:773px;width:99px;height:17px;">发送 : 50</div>
<div class="pane" style="left:1274px;top:773px;width:100px;height:17px;">接收 : 50</div>
<div class="rais" style="left:1375px;top:774px;width:57px;height:17px;overflow:hidden;border-right:0;box-shadow:inset 0 -1px 0 #a0a0a0"><div class="t sp" style="left:2px;top:1px">复位计数</div></div>
</div>
</body>
</html>
